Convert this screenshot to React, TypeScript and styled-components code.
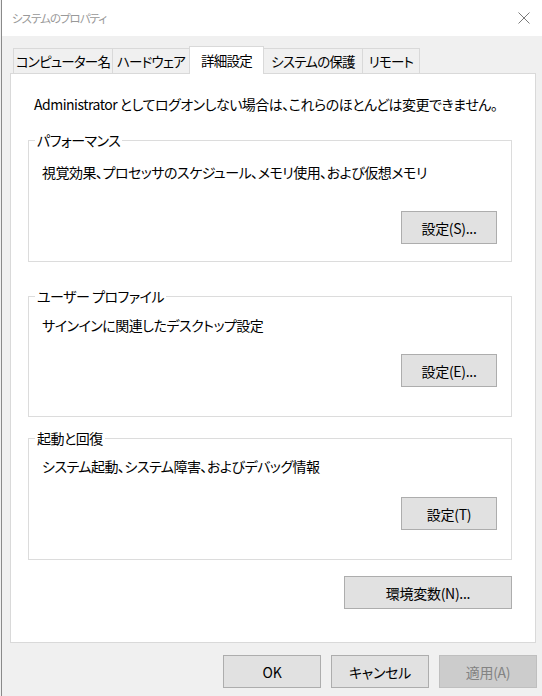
import React from 'react';
import styled, { createGlobalStyle } from 'styled-components';

const GlobalStyle = createGlobalStyle`
  html, body {
    margin: 0;
    padding: 0;
    background: #f0f0f0;
  }
  body {
    font-family: "Noto Sans CJK JP", "Noto Sans", sans-serif;
    font-feature-settings: "palt";
    color: #000;
  }
`;

const Window = styled.div`
  width: 540px;
  height: 696px;
  margin-left: 1px;
  border-left: 1px solid #8a8a8a;
  background: #f0f0f0;
  display: flex;
  flex-direction: column;
  font-size: 14px;
  letter-spacing: -0.5px;
`;

const TitleBar = styled.div`
  height: 36px;
  background: #fff;
  display: flex;
  align-items: center;
  justify-content: space-between;
  padding: 0 12px 0 10px;
`;

const Title = styled.div`
  font-size: 11.5px;
  color: #999;
  letter-spacing: -1px;
`;

const Body = styled.div`
  flex: 1;
  display: flex;
  flex-direction: column;
  padding: 10px 0 0 8px;
`;

const TabStrip = styled.div`
  display: flex;
  align-items: flex-end;
  height: 27px;
  padding-left: 3px;
`;

const Tab = styled.div<{ $w: number; $active?: boolean }>`
  box-sizing: border-box;
  width: ${p => p.$w}px;
  height: ${p => (p.$active ? 28 : 25)}px;
  margin-left: -1px;
  margin-bottom: ${p => (p.$active ? -1 : 0)}px;
  border: 1px solid #d9d9d9;
  border-bottom: none;
  background: ${p => (p.$active ? '#fff' : '#f0f0f0')};
  position: relative;
  z-index: ${p => (p.$active ? 1 : 0)};
  display: flex;
  align-items: ${p => (p.$active ? 'flex-start' : 'center')};
  padding-top: ${p => (p.$active ? 3 : 0)}px;
  justify-content: center;
  font-size: 13.5px;
  letter-spacing: -0.8px;
  line-height: 20px;
  white-space: nowrap;
  &:first-child {
    margin-left: 0;
  }
`;

const Panel = styled.div`
  box-sizing: border-box;
  width: 526px;
  height: 570px;
  background: #fff;
  border: 1px solid #d9d9d9;
  padding: 20px 23px 0 17px;
  display: flex;
  flex-direction: column;
`;

const Notice = styled.div`
  line-height: 20px;
  padding-left: 6px;
  margin-bottom: 16px;
  white-space: nowrap;
`;

const Group = styled.fieldset<{ $pb: number; $mb: number }>`
  margin: 0 0 ${p => p.$mb}px 0;
  padding: 0 14px ${p => p.$pb}px 13px;
  border: 1px solid #dcdcdc;
  min-width: 0;
  display: flex;
  flex-direction: column;
`;

const Legend = styled.legend`
  margin-left: -7px;
  padding: 0 2px;
  line-height: 20px;
  font-size: 14px;
`;

const Description = styled.div<{ $mt: number }>`
  margin-top: ${p => p.$mt}px;
  line-height: 20px;
  white-space: nowrap;
`;

const ButtonRow = styled.div<{ $mt?: number }>`
  display: flex;
  justify-content: flex-end;
  gap: 10px;
  margin-top: ${p => p.$mt ?? 0}px;
`;

const Button = styled.button<{ $w: number; $disabled?: boolean }>`
  box-sizing: border-box;
  width: ${p => p.$w}px;
  height: 33px;
  padding: 0;
  border: 1px solid ${p => (p.$disabled ? '#bfbfbf' : '#adadad')};
  background: ${p => (p.$disabled ? '#cccccc' : '#e1e1e1')};
  color: ${p => (p.$disabled ? '#838383' : '#000')};
  font-family: inherit;
  font-feature-settings: "palt";
  font-size: 14px;
  letter-spacing: -0.3px;
  line-height: 20px;
`;

const Footer = styled.div`
  display: flex;
  justify-content: flex-end;
  gap: 10px;
  padding: 12px 5px 0 0;
`;

const CloseIcon = () => (
  <svg width="12" height="12" viewBox="0 0 12 12">
    <path d="M0.5 0.5 L11.5 11.5 M11.5 0.5 L0.5 11.5" stroke="#7a7a7a" strokeWidth="1" fill="none" />
  </svg>
);

const tabs = [
  { label: 'コンピューター名', w: 100 },
  { label: 'ハードウェア', w: 78 },
  { label: '詳細設定', w: 75, active: true },
  { label: 'システムの保護', w: 100 },
  { label: 'リモート', w: 58 },
];

const App = () => {
  return (
    <>
      <GlobalStyle />
      <Window>
        <TitleBar>
          <Title>システムのプロパティ</Title>
          <CloseIcon />
        </TitleBar>
        <Body>
          <TabStrip>
            {tabs.map(t => (
              <Tab key={t.label} $w={t.w} $active={t.active}>
                {t.label}
              </Tab>
            ))}
          </TabStrip>
          <Panel>
            <Notice>Administrator としてログオンしない場合は、これらのほとんどは変更できません。</Notice>
            <Group $pb={17} $mb={24}>
              <Legend>パフォーマンス</Legend>
              <Description $mt={12}>視覚効果、プロセッサのスケジュール、メモリ使用、および仮想メモリ</Description>
              <ButtonRow $mt={29}>
                <Button $w={96}>設定(S)...</Button>
              </ButtonRow>
            </Group>
            <Group $pb={29} $mb={11}>
              <Legend>ユーザー プロファイル</Legend>
              <Description $mt={9}>サインインに関連したデスクトップ設定</Description>
              <ButtonRow $mt={19}>
                <Button $w={96}>設定(E)...</Button>
              </ButtonRow>
            </Group>
            <Group $pb={29} $mb={16}>
              <Legend>起動と回復</Legend>
              <Description $mt={8}>システム起動、システム障害、およびデバッグ情報</Description>
              <ButtonRow $mt={21}>
                <Button $w={96}>設定(T)</Button>
              </ButtonRow>
            </Group>
            <ButtonRow>
              <Button $w={168}>環境変数(N)...</Button>
            </ButtonRow>
          </Panel>
          <Footer>
            <Button $w={98}>OK</Button>
            <Button $w={98}>キャンセル</Button>
            <Button $w={98} $disabled>適用(A)</Button>
          </Footer>
        </Body>
      </Window>
    </>
  );
};

export default App;
